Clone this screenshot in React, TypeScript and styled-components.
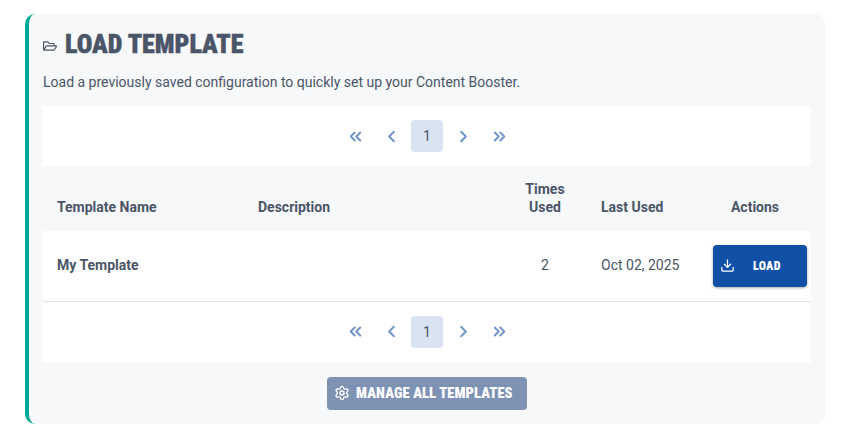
import styled, { createGlobalStyle } from "styled-components";
import { ChevronLeft, ChevronRight, ChevronsLeft, ChevronsRight, Download, Settings } from "lucide-react";
import { FaRegFolderOpen } from "react-icons/fa";

const GlobalStyle = createGlobalStyle`
    html, body {
        margin: 0;
        padding: 0;
        background: #ffffff;
    }
    body {
        font-family: Roboto, "Liberation Sans", sans-serif;
        color: #4a5568;
    }
`

const Page = styled.div`
    width: 867px;
    height: 448px;
    box-sizing: border-box;
    padding: 14px 42px 24px 25px;
`

const Card = styled.section`
    height: 410px;
    box-sizing: border-box;
    padding: 16px 14px 0 14px;
    background: #f7f8fa;
    border-left: 4px solid #00a896;
    border-radius: 10px;
`

const Title = styled.h2`
    display: flex;
    align-items: center;
    gap: 8px;
    height: 28px;
    margin: 0;
    font-family: Roboto, sans-serif;
    font-size: 26px;
    font-weight: 900;
    font-stretch: 80%;
    letter-spacing: 0;
    line-height: 28px;
    color: #4a5568;
    -webkit-text-stroke: 0.4px #4a5568;
`

const TitleIcon = styled.span`
    display: flex;
    margin-top: 4px;
`

const Intro = styled.p`
    margin: 14px 0 0 0;
    height: 20px;
    font-size: 14px;
    line-height: 20px;
    color: #4a5568;
`

const Pager = styled.nav<{ $top?: boolean }>`
    display: flex;
    justify-content: center;
    align-items: center;
    gap: 4px;
    height: 60px;
    margin-top: ${props => (props.$top ? "14px" : "0")};
    background: #ffffff;
`

const PageBtn = styled.button<{ $active?: boolean }>`
    display: flex;
    align-items: center;
    justify-content: center;
    width: 32px;
    height: 32px;
    padding: 0;
    border: none;
    border-radius: 4px;
    font-family: Roboto, sans-serif;
    font-size: 14px;
    color: ${props => (props.$active ? "#4a5568" : "#6e94c9")};
    background: ${props => (props.$active ? "#d9e3f1" : "transparent")};
`

const Table = styled.table`
    width: 768px;
    border-collapse: collapse;
    table-layout: fixed;
`

const HeadCell = styled.th<{ $w: number; $center?: boolean }>`
    width: ${props => props.$w}px;
    height: 65px;
    box-sizing: border-box;
    padding: 0 14px 15px 14px;
    font-size: 14px;
    font-weight: 700;
    line-height: 18px;
    color: #4a5568;
    vertical-align: bottom;
    text-align: ${props => (props.$center ? "center" : "left")};
`

const Row = styled.tr`
    height: 70px;
    background: #ffffff;
    border-bottom: 1px solid #e2e4e8;
`

const Cell = styled.td<{ $center?: boolean; $bold?: boolean }>`
    padding: 0 14px 2px 14px;
    font-size: 14px;
    font-weight: ${props => (props.$bold ? 700 : 400)};
    color: #4a5568;
    text-align: ${props => (props.$center ? "center" : "left")};
`

const ActionCell = styled.td`
    padding: 0 4px 0 14px;
`

const LoadBtn = styled.button`
    display: flex;
    align-items: center;
    width: 94px;
    height: 42px;
    padding: 0 0 0 7px;
    border: none;
    border-radius: 4px;
    background: #1150a7;
    color: #ffffff;
    font-family: Roboto, sans-serif;
    font-size: 12px;
    font-weight: 900;
    font-stretch: 80%;
    letter-spacing: 0.3px;
    box-shadow: 0 1px 3px rgba(0, 0, 0, 0.35);
`

const LoadLabel = styled.span`
    margin-left: 18px;
`

const Footer = styled.div`
    display: flex;
    justify-content: center;
    margin-top: 15px;
`

const ManageBtn = styled.button`
    display: flex;
    align-items: center;
    gap: 6px;
    width: 200px;
    height: 33px;
    padding: 0 0 0 7px;
    border: none;
    border-radius: 4px;
    background: #7e92b3;
    color: #ffffff;
    font-family: Roboto, sans-serif;
    font-size: 14.5px;
    font-weight: 900;
    font-stretch: 80%;
    letter-spacing: 0.1px;
    white-space: nowrap;
`

function Pagination({ top }: { top?: boolean }) {
    return (
        <Pager $top={top}>
            <PageBtn aria-label="first"><ChevronsLeft size={19} strokeWidth={2.4} /></PageBtn>
            <PageBtn aria-label="previous"><ChevronLeft size={19} strokeWidth={2.4} /></PageBtn>
            <PageBtn $active>1</PageBtn>
            <PageBtn aria-label="next"><ChevronRight size={19} strokeWidth={2.4} /></PageBtn>
            <PageBtn aria-label="last"><ChevronsRight size={19} strokeWidth={2.4} /></PageBtn>
        </Pager>
    )
}

function App() {
    return (
        <Page>
            <GlobalStyle />
            <Card>
                <Title>
                    <TitleIcon><FaRegFolderOpen size={14} /></TitleIcon>
                    LOAD TEMPLATE
                </Title>
                <Intro>Load a previously saved configuration to quickly set up your Content Booster.</Intro>
                <Pagination top />
                <Table>
                    <thead>
                        <tr>
                            <HeadCell $w={201}>Template Name</HeadCell>
                            <HeadCell $w={259}>Description</HeadCell>
                            <HeadCell $w={84} $center>Times Used</HeadCell>
                            <HeadCell $w={112}>Last Used</HeadCell>
                            <HeadCell $w={112} $center>Actions</HeadCell>
                        </tr>
                    </thead>
                    <tbody>
                        <Row>
                            <Cell $bold>My Template</Cell>
                            <Cell></Cell>
                            <Cell $center>2</Cell>
                            <Cell>Oct 02, 2025</Cell>
                            <ActionCell>
                                <LoadBtn>
                                    <Download size={15} />
                                    <LoadLabel>LOAD</LoadLabel>
                                </LoadBtn>
                            </ActionCell>
                        </Row>
                    </tbody>
                </Table>
                <Pagination />
                <Footer>
                    <ManageBtn>
                        <Settings size={16} />
                        MANAGE ALL TEMPLATES
                    </ManageBtn>
                </Footer>
            </Card>
        </Page>
    )
}

export default App;
